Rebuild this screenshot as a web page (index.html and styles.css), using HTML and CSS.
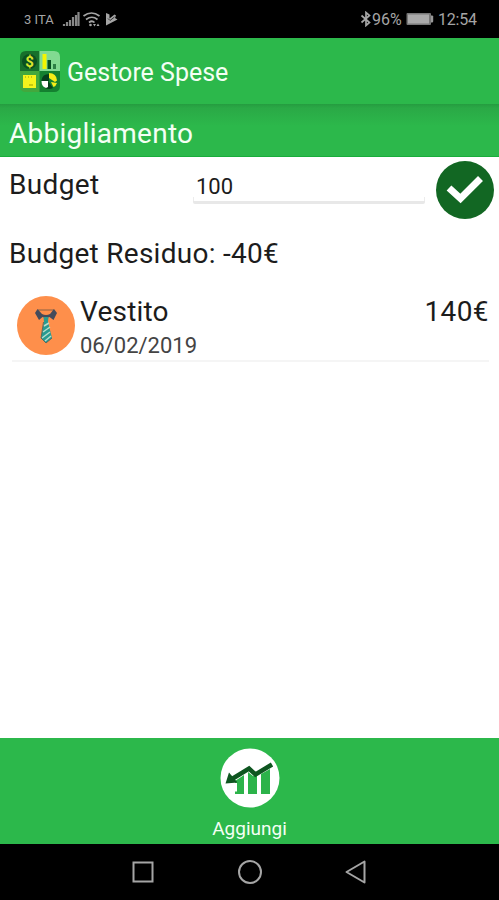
FILE: index.html
```html
<!DOCTYPE html>
<html lang="it">
<head>
    <meta charset="UTF-8">
    <meta name="viewport" content="width=device-width, initial-scale=1.0">
    <title>Gestore Spese</title>
    <link rel="stylesheet" href="styles.css">
</head>
<body>
    <div class="status-bar">
        <span class="carrier">3 ITA</span>
        <svg class="status-icons" width="56" height="18" viewBox="0 0 56 18">
            <path d="M2 16v-2M5 16v-4M8 16v-6M11 16V7M14 16V5M16.500 16V2" stroke="#888" stroke-width="2.200"/>
            <path d="M21.500 6q8-6 16 0M24 9.500q6-4.500 11.500 0M27 12.500q3-2.500 5.500 0" fill="none" stroke="#a5a5a5" stroke-width="1.700"/>
            <circle cx="28.500" cy="15" r="1.300" fill="#a5a5a5"/>
            <path d="M31 14h3l-1.500 2.500zM34.500 16h3l-1.500-2.500z" fill="#a5a5a5"/>
            <path d="M44 3l3.500 1.500v4l5-4 1.500 1-1 2.500 2.500 1.500-11.500 6z" fill="#a5a5a5"/>
            <path d="M46 8.500l2 2 4.500-3.500" fill="none" stroke="#333" stroke-width="1"/>
        </svg>
        <svg class="bluetooth" width="12" height="16" viewBox="0 0 12 16">
            <path d="M1.500 4.500l8 7L6 14.500v-13l3.500 3-8 7" fill="none" stroke="#a5a5a5" stroke-width="1.700"/>
        </svg>
        <span class="status-text percent">96%</span>
        <svg class="battery" width="28" height="14" viewBox="0 0 28 14">
            <rect x=".5" y="1" width="24.500" height="12" rx="1" fill="#777"/>
            <rect x="2" y="2.500" width="21" height="9" fill="#aaa"/>
            <path d="M25 3.500h1.500l.7 1v5l-.7 1H25z" fill="#999"/>
        </svg>
        <span class="status-text clock">12:54</span>
    </div>

    <div class="app-bar">
        <svg class="logo" width="40" height="41" viewBox="0 0 40 41">
            <path d="M19.500 0H6Q0 0 0 6v14h19.500z" fill="#17702b"/>
            <path d="M19.500 0H34q6 0 6 6v14H19.500z" fill="#82da91"/>
            <path d="M0 20h19.500v21H6q-6 0-6-6z" fill="#43a83d"/>
            <path d="M19.500 20H40v15q0 6-6 6H19.500z" fill="#148130"/>
            <circle cx="9.500" cy="10.500" r="7.500" fill="#0b5020"/>
            <text x="9.500" y="16" class="dollar">$</text>
            <path d="M22.500 3h4v15h-4z" fill="#f4f500"/>
            <path d="M27.500 9H31v9h-3.500z" fill="#075020"/>
            <path d="M33 13h3v5h-3z" fill="#2d8045"/>
            <path d="M3 24h13v13H3z" fill="#f5f31c"/>
            <path d="M5 26h1M8 26h1M11 26h1M9 34h4" stroke="#99a000" stroke-width="1.200"/>
            <path d="M21.500 29q1-6 7.500-6v7h-7.500zM28 30l5 7q-4 2-8 0z" fill="#06401d"/>
            <path d="M29 22q7.500 0 8 7.500L35 31l-6-4z" fill="#f5ed18"/>
            <path d="M21.500 30h6.500v6l-2 1q-4.500-1.500-4.500-7z" fill="#fff"/>
            <path d="M31 31l6 1q-1 3-3.500 4z" fill="#f5ed18"/>
        </svg>
        <h1 class="app-title">Gestore Spese</h1>
    </div>

    <div class="category-bar">
        <h2 class="category-title">Abbigliamento</h2>
    </div>

    <div class="content">
        <div class="budget-row">
            <label class="budget-label" for="budget">Budget</label>
            <input class="budget-input" type="text" id="budget" value="100">
            <button class="confirm-btn" aria-label="Conferma">
                <svg width="58" height="58" viewBox="0 0 58 58">
                    <circle cx="29" cy="29" r="29" fill="#126723"/>
                    <path d="M13 27L24.500 37.500L44.500 17.500" fill="none" stroke="#fff" stroke-width="7"/>
                </svg>
            </button>
        </div>

        <p class="residual">Budget Residuo: -40€</p>

        <div class="expense">
            <svg class="expense-icon" width="58" height="59" viewBox="0 0 58 59">
                <ellipse cx="29" cy="29.500" rx="29" ry="29.500" fill="#fe8f4b"/>
                <path d="M21 14h16" stroke="#8a6045" stroke-width="1"/>
                <path d="M20.500 13L18 17l4 7 3.500-3 3.500 1 3.500-1 4 3 3.500-7-3-4-4 5q-4 2-8 0z" fill="#444b5b"/>
                <path d="M26.500 21h5l-.5 5 4 16-6 5-5-5 3-16z" fill="#299b91"/>
                <path d="M27 30l5-3M26 36l7-5M25 42l8-6M28 45l6-5" stroke="#b9dccb" stroke-width="1.500"/>
                <path d="M26.500 26l-2.500 16 5 5 6-5" fill="none" stroke="#46605d" stroke-width=".8"/>
            </svg>
            <div class="expense-info">
                <div class="expense-name">Vestito</div>
                <div class="expense-date">06/02/2019</div>
            </div>
            <div class="expense-amount">140€</div>
        </div>
    </div>

    <div class="bottom-bar">
        <svg width="60" height="60" viewBox="0 0 60 60">
            <circle cx="30" cy="30" r="29.500" fill="#fff"/>
            <path d="M15 33l9-6v19h-9v-2.500h2V35h-2zM28 24l5 4 4-1v19h-9zM41 26l9-5v25h-9z" fill="#2cb34a"/>
            <path d="M12 31L29 20.500L35.500 26.500L52 16.500" fill="none" stroke="#0e5620" stroke-width="4.500"/>
            <path d="M5.500 35.500L9 24.500l8.500 10z" fill="#0e5620"/>
        </svg>
        <div class="add-label">Aggiungi</div>
    </div>

    <div class="nav-bar">
        <svg width="24" height="26" viewBox="0 0 24 26">
            <rect x="2.500" y="3.500" width="19" height="19" fill="none" stroke="#a5a5a5" stroke-width="2"/>
        </svg>
        <svg width="26" height="26" viewBox="0 0 26 26">
            <circle cx="13" cy="13" r="11" fill="none" stroke="#a5a5a5" stroke-width="2"/>
        </svg>
        <svg width="24" height="26" viewBox="0 0 24 26">
            <path d="M2.500 13L20.500 2.500v21z" fill="none" stroke="#a5a5a5" stroke-width="2" stroke-linejoin="round"/>
        </svg>
    </div>
</body>
</html>
```
FILE: styles.css
```css
:root {
    --green: #2cb84b;
    --text: #1c1c1c;
}

* {
    margin: 0;
    padding: 0;
    box-sizing: border-box;
    font-family: Roboto, sans-serif;
}

body {
    display: flex;
    flex-direction: column;
    height: 900px;
    background-color: #fff;
    color: var(--text);
    overflow: hidden;
}

.status-bar {
    display: flex;
    align-items: center;
    height: 38px;
    padding: 0 22px 0 24px;
    background-color: #000;
    color: #a5a5a5;
    flex-shrink: 0;
}

.carrier {
    width: 38px;
    font-size: 13px;
    line-height: 18px;
    padding-top: 2px;
    white-space: nowrap;
}

.bluetooth {
    margin-left: auto;
}

.status-text {
    font-size: 16px;
    line-height: 18px;
    padding-top: 1px;
}

.percent {
    width: 34px;
}

.clock {
    width: 39px;
    margin-left: 4px;
    letter-spacing: -0.2px;
}

.app-bar {
    display: flex;
    align-items: center;
    height: 66px;
    padding-left: 20px;
    background-color: var(--green);
    flex-shrink: 0;
}

.dollar {
    font-size: 15px;
    font-weight: bold;
    fill: #d8e52d;
    text-anchor: middle;
}

.app-title {
    margin-left: 7px;
    padding-top: 3px;
    font-size: 25px;
    font-weight: 400;
    color: #f4fff4;
}

.category-bar {
    display: flex;
    align-items: center;
    height: 53px;
    padding: 7px 9px 0;
    background: linear-gradient(#259c40 0, #2aa946 4px, #2cb84b 22px);
    border-bottom: 1px solid #19ad3b;
    flex-shrink: 0;
}

.category-title {
    font-size: 28px;
    font-weight: 400;
    letter-spacing: 0.27px;
    color: #f4fff4;
}

.content {
    flex: 1;
    padding: 4px 10px 0 9px;
}

.budget-row {
    display: flex;
    height: 58px;
    margin-right: -5px;
}

.budget-label {
    width: 184px;
    font-size: 28px;
    line-height: 48px;
    letter-spacing: 0.35px;
}

.budget-input {
    width: 232px;
    height: 43px;
    padding: 10px 3px 0;
    border: none;
    border-bottom: 3px solid #e8e8e8;
    border-radius: 0 0 2px 2px;
    font-size: 22px;
    color: var(--text);
    background: linear-gradient(#ececec, #ececec) left bottom / 1px 4px no-repeat,
        linear-gradient(#ececec, #ececec) right bottom / 1px 4px no-repeat;
    outline: none;
}

.confirm-btn {
    width: 58px;
    height: 58px;
    margin-left: auto;
    border: none;
    background: none;
}

.residual {
    margin-top: 17px;
    font-size: 28px;
    line-height: 36px;
    letter-spacing: 0.27px;
}

.expense {
    display: flex;
    height: 67px;
    margin: 23px 0 0 3px;
    border-bottom: 2px solid #f5f5f5;
}

.expense-icon {
    margin: 1px 5px 0;
}

.expense-name,
.expense-amount {
    font-size: 28px;
    line-height: 34px;
    letter-spacing: 0.2px;
}

.expense-date {
    font-size: 22px;
    line-height: 33px;
    color: #444;
}

.expense-amount {
    margin-left: auto;
    letter-spacing: 0.4px;
}

.bottom-bar {
    display: flex;
    flex-direction: column;
    align-items: center;
    height: 106px;
    padding-top: 10px;
    background-color: var(--green);
    flex-shrink: 0;
}

.add-label {
    margin-top: 9px;
    font-size: 19px;
    line-height: 24px;
    color: #f4fff4;
}

.nav-bar {
    display: flex;
    justify-content: space-between;
    height: 56px;
    padding: 15px 131px;
    background-color: #000;
    flex-shrink: 0;
}
```
